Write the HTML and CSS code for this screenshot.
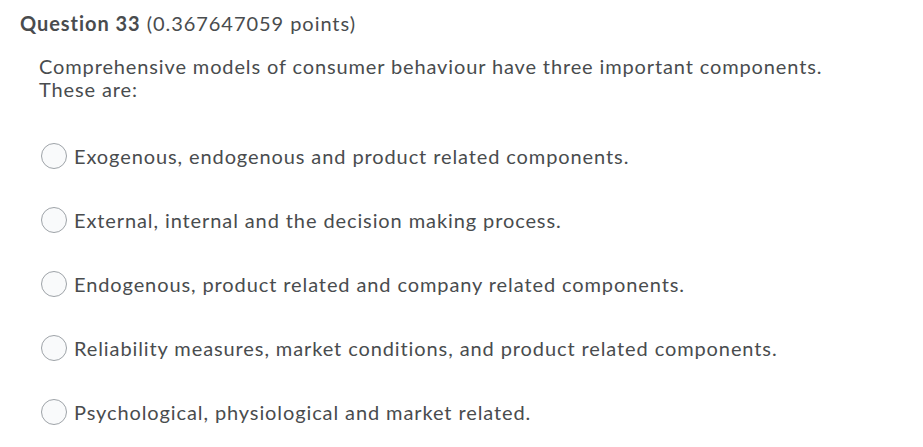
FILE: index.html
```html
<!DOCTYPE html>
<html>
<head>
<meta charset="utf-8">
<link rel="stylesheet" href="styles.css">
</head>
<body>
<div class="question">
  <h2 class="q-title"><span class="q-num">Question 33</span> (0.367647059 points)</h2>
  <p class="q-text">Comprehensive models of consumer behaviour have three important components.<br>These are:</p>
  <ul class="options">
    <li class="option"><span class="radio"></span><span class="label">Exogenous, endogenous and product related components.</span></li>
    <li class="option"><span class="radio"></span><span class="label">External, internal and the decision making process.</span></li>
    <li class="option"><span class="radio"></span><span class="label">Endogenous, product related and company related components.</span></li>
    <li class="option"><span class="radio"></span><span class="label">Reliability measures, market conditions, and product related components.</span></li>
    <li class="option"><span class="radio"></span><span class="label">Psychological, physiological and market related.</span></li>
  </ul>
</div>
</body>
</html>
```

FILE: styles.css
```css
html, body {
  margin: 0;
  padding: 0;
  background: #ffffff;
}
body {
  font-family: Lato, "Liberation Sans", sans-serif;
  color: #494c4e;
}
.question {
  padding: 10px 0 0 20px;
}
.q-title {
  margin: 0;
  font-size: 20px;
  font-weight: normal;
  line-height: 26px;
  letter-spacing: 0.95px;
}
.q-num {
  font-weight: bold;
}
.q-text {
  margin: 19px 0 0 19px;
  font-size: 20px;
  line-height: 22.5px;
  letter-spacing: 0.87px;
}
.options {
  list-style: none;
  margin: 42px 0 0 21px;
  padding: 0;
}
.option {
  display: flex;
  align-items: center;
  height: 27px;
  margin-bottom: 37px;
}
.radio {
  box-sizing: border-box;
  width: 26px;
  height: 26px;
  border: 1px solid #9ea3a8;
  border-radius: 50%;
  background: #f9fafb;
  flex: none;
}
.label {
  margin-left: 7px;
  font-size: 20px;
  letter-spacing: 0.9px;
}
```
